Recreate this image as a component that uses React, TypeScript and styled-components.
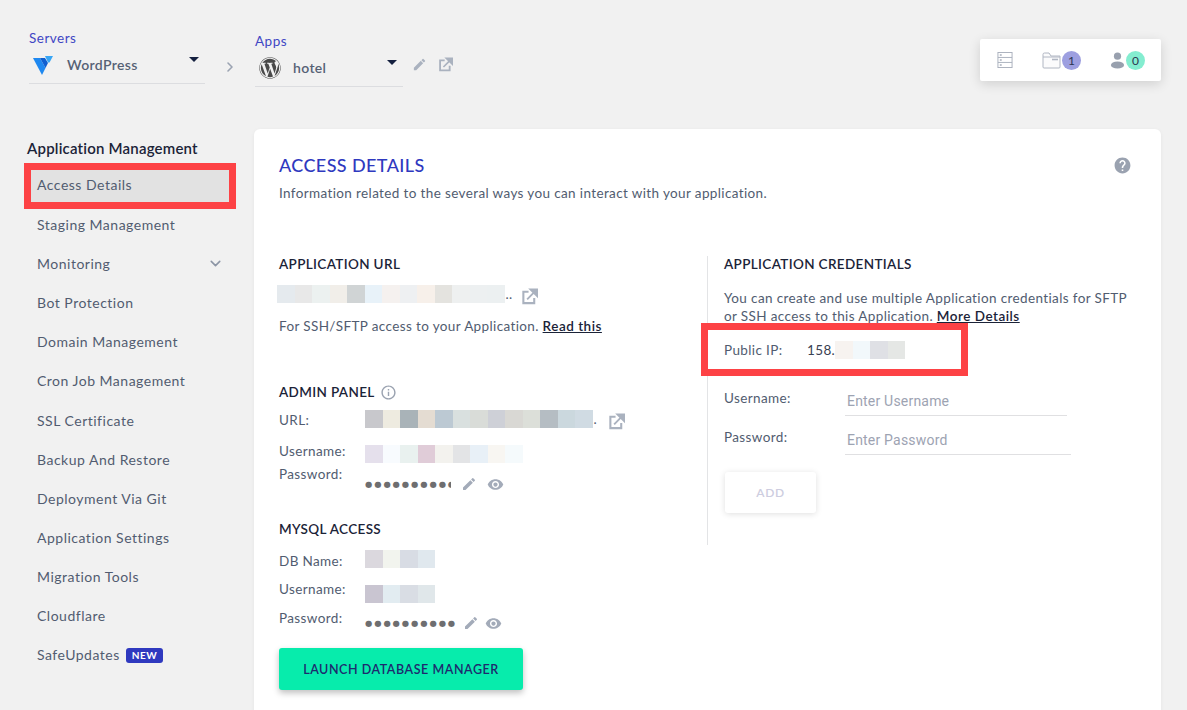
import React from "react";
import styled, { createGlobalStyle } from "styled-components";
import { FaWordpress } from "react-icons/fa";
import { MdEdit, MdHelp, MdInfoOutline, MdVisibility } from "react-icons/md";
import { ChevronDown, ChevronRight } from "lucide-react";

const GlobalStyle = createGlobalStyle`
  html, body {
    margin: 0;
    height: 710px;
    overflow: hidden;
    background: #f1f1f1;
    font-family: "Lato", "Liberation Sans", sans-serif;
    font-size: 13.5px;
    letter-spacing: 0.37px;
    color: #515c70;
  }
  * { box-sizing: border-box; }
`;

const menu = [
  "Staging Management",
  "Monitoring",
  "Bot Protection",
  "Domain Management",
  "Cron Job Management",
  "SSL Certificate",
  "Backup And Restore",
  "Deployment Via Git",
  "Application Settings",
  "Migration Tools",
  "Cloudflare",
];

const ExternalIcon = ({ size = 17 }: { size?: number }) => (
  <IconSvg width={size} height={size} viewBox="0 0 18 18">
    <path d="M8 4H2.5V16H14V10.5" fill="none" stroke="#aab2bf" strokeWidth="2.2" />
    <path d="M6.5 12 L13 5.5 M10 1.5H17V8.5Z" fill="#aab2bf" stroke="#aab2bf" strokeWidth="2" />
  </IconSvg>
);

const Mosaic = ({ colors }: { colors: string[] }) => (
  <MosaicRow>
    {colors.map((c, i) => (
      <MosaicCell key={i} $color={c} />
    ))}
  </MosaicRow>
);

export default function App() {
  return (
    <Page>
      <GlobalStyle />
      <TopBar>
        <Crumb $width={176}>
          <CrumbLabel>Servers</CrumbLabel>
          <Selector>
            <svg width="20" height="20" viewBox="0 0 20 20">
              <path d="M0 3H7L12.5 13L9 20Z" fill="#1e88f0" />
              <path d="M7 3H12L15 8L12.5 13Z" fill="#0f5fd0" />
              <path d="M12 1H20L16.5 7.5H15Z" fill="#38a6f5" />
            </svg>
            <SelectorName $gap={14}>WordPress</SelectorName>
            <Caret />
          </Selector>
        </Crumb>
        <CrumbArrow>
          <ChevronRight size={16} color="#9ba3b2" strokeWidth={2.4} />
        </CrumbArrow>
        <Crumb $width={148} $offset={3}>
          <CrumbLabel>Apps</CrumbLabel>
          <Selector>
            <FaWordpress size={22} color="#4a4a4a" />
            <SelectorName $gap={12}>hotel</SelectorName>
            <Caret />
          </Selector>
        </Crumb>
        <CrumbTools>
          <MdEdit size={15} color="#aab2bf" />
          <ExternalIcon size={15} />
        </CrumbTools>
        <Stats>
          <StatItem>
            <svg width="16" height="18" viewBox="0 0 17 18" fill="none" stroke="#a8afbc" strokeWidth="1">
              <rect x="1" y="1" width="15" height="16" />
              <path d="M1 6.3H16M1 11.6H16" />
              <path d="M3 3.6H5M3 9H5M3 14.3H5" strokeWidth="1.6" />
            </svg>
          </StatItem>
          <StatItem>
            <svg width="19" height="17" viewBox="0 0 19 17" fill="none" stroke="#b0b6c2" strokeWidth="1">
              <path d="M1 15V2.5Q1 1 2.5 1H7L9 4H18V15Q18 16 17 16H2Q1 16 1 15Z" fill="#fbfbfc" />
              <path d="M1 5H18" />
              <path d="M10 7.5H16" strokeWidth="1.6" />
            </svg>
            <Badge $color="#9d9fe0">1</Badge>
          </StatItem>
          <StatItem>
            <svg width="15" height="17" viewBox="0 0 14 17" fill="#98a0ae">
              <circle cx="7" cy="4.2" r="3.6" />
              <ellipse cx="7" cy="13" rx="6.6" ry="3.6" />
            </svg>
            <Badge $color="#84edd0">0</Badge>
          </StatItem>
        </Stats>
      </TopBar>
      <Body>
        <Sidebar>
          <SideTitle>Application Management</SideTitle>
          <SideActive>Access Details</SideActive>
          {menu.map((m) => (
            <SideItem key={m}>
              {m}
              {m === "Monitoring" && <ChevronDown size={17} color="#8c95a5" strokeWidth={2.2} />}
            </SideItem>
          ))}
          <SideItem>
            <span>
              SafeUpdates <NewTag>NEW</NewTag>
            </span>
          </SideItem>
        </Sidebar>
        <Card>
          <CardHead>
            <CardTitle>ACCESS DETAILS</CardTitle>
            <MdHelp size={19} color="#9aa2b0" />
          </CardHead>
          <CardText>Information related to the several ways you can interact with your application.</CardText>
          <Columns>
            <LeftColumn>
              <SectionTitle>APPLICATION URL</SectionTitle>
              <UrlRow $top={12} $left={-2} $iconGap={8}>
                <Mosaic colors={["#e5eaee", "#e8e8e8", "#ecf1f0", "#f1eee9", "#d0d4d5", "#e8f2f9", "#f5f1ef", "#eef0f2", "#f7f0ea", "#e4e3df", "#eef0f0", "#edf0f1", "#ecf0f1"]} />
                <Ellipsis>..</Ellipsis>
                <ExternalIcon />
              </UrlRow>
              <Note>
                For SSH/SFTP access to your Application. <StrongLink>Read this</StrongLink>
              </Note>

              <PanelTitle>
                ADMIN PANEL <MdInfoOutline size={17} color="#9aa2b0" />
              </PanelTitle>
              <DataRow $height={31}>
                <span>URL:</span>
                <UrlRow $top={-1} $iconGap={11}>
                  <Mosaic colors={["#c8c8cc", "#eeebe0", "#a9b3b8", "#e4dcd2", "#bcc9d3", "#d9e0df", "#d9dcd8", "#ced0d7", "#d9d8d4", "#dcdfd9", "#b5bdc3", "#cbd8de", "#d0dbe3"]} />
                  <Ellipsis>.</Ellipsis>
                  <ExternalIcon />
                </UrlRow>
              </DataRow>
              <DataRow $height={23}>
                <span>Username:</span>
                <Value $top={3}>
                  <Mosaic colors={["#e5e0ec", "#f8fbfe", "#e9f1ef", "#e0ccd8", "#f3f2ee", "#e3e4e6", "#e8f0f7", "#f8f6f2", "#f5fafc"]} />
                </Value>
              </DataRow>
              <DataRow $height={56}>
                <span>Password:</span>
                <SecretRow $top={10} $gap={10}>
                  <Dots $width={86}>{"●".repeat(10)}</Dots>
                  <MdEdit size={16} color="#a3abb9" />
                  <MdVisibility size={17} color="#a3abb9" />
                </SecretRow>
              </DataRow>

              <MysqlTitle>MYSQL ACCESS</MysqlTitle>
              <DataRow $height={28}>
                <span>DB Name:</span>
                <Value $top={-2}>
                  <Mosaic colors={["#dbd8de", "#f2f4ee", "#d8dce4", "#e0e8ee"]} />
                </Value>
              </DataRow>
              <DataRow $height={29}>
                <span>Username:</span>
                <Value $top={5}>
                  <Mosaic colors={["#c9c5d1", "#e2ecf1", "#d9dde4", "#e0e7ea"]} />
                </Value>
              </DataRow>
              <DataRow $height={39}>
                <span>Password:</span>
                <SecretRow $top={5} $gap={6}>
                  <Dots $width={92}>{"●".repeat(10)}</Dots>
                  <MdEdit size={16} color="#a3abb9" />
                  <MdVisibility size={17} color="#a3abb9" />
                </SecretRow>
              </DataRow>
              <LaunchButton>LAUNCH DATABASE MANAGER</LaunchButton>
            </LeftColumn>
            <RightColumn>
              <SectionTitle>APPLICATION CREDENTIALS</SectionTitle>
              <CredentialsNote>
                You can create and use multiple Application credentials for SFTP or SSH access to this Application.{" "}
                <StrongLink>More Details</StrongLink>
              </CredentialsNote>
              <PublicIp>
                <IpLabel>Public IP:</IpLabel>
                <IpValue>158.</IpValue>
                <Mosaic colors={["#f7f3f0", "#f2f8fb", "#dfe0e5", "#e5e7e5"]} />
              </PublicIp>
              <Field $width={222}>
                <span>Username:</span>
                <FieldInput placeholder="Enter Username" />
              </Field>
              <Field $width={226}>
                <span>Password:</span>
                <FieldInput placeholder="Enter Password" />
              </Field>
              <AddButton>ADD</AddButton>
            </RightColumn>
          </Columns>
        </Card>
      </Body>
    </Page>
  );
}

const Page = styled.div`
  height: 710px;
  overflow: hidden;
`;

const TopBar = styled.header`
  display: flex;
  align-items: flex-start;
  height: 129px;
  padding: 31px 26px 0 29px;
`;

const Crumb = styled.div<{ $width: number; $offset?: number }>`
  width: ${(p) => p.$width}px;
  margin-top: ${(p) => p.$offset ?? 0}px;
`;

const CrumbLabel = styled.div`
  color: #4046c4;
  font-size: 13.5px;
  line-height: 15px;
  letter-spacing: 0.5px;
`;

const Selector = styled.div`
  display: flex;
  align-items: center;
  height: 38px;
  padding-left: 4px;
  border-bottom: 1px solid #dcdde0;
`;

const SelectorName = styled.span<{ $gap: number }>`
  margin-left: ${(p) => p.$gap}px;
  font-size: 14px;
  font-weight: 600;
  letter-spacing: 0.35px;
  color: #566175;
  flex: 1;
`;

const Caret = styled.span`
  width: 0;
  height: 0;
  margin: 0 6px 11px 0;
  border-left: 5px solid transparent;
  border-right: 5px solid transparent;
  border-top: 5px solid #14203f;
`;

const CrumbArrow = styled.div`
  width: 50px;
  display: flex;
  justify-content: center;
  margin-top: 28px;
`;

const CrumbTools = styled.div`
  display: flex;
  align-items: center;
  gap: 11px;
  margin: 26px 0 0 9px;
`;

const IconSvg = styled.svg`
  display: block;
  flex: none;
`;

const Stats = styled.div`
  margin: 8px 0 0 auto;
  width: 181px;
  height: 42px;
  display: flex;
  align-items: center;
  padding-left: 17px;
  gap: 29px;
  background: #fff;
  border-radius: 2px;
  box-shadow: 0 3px 12px rgba(0, 0, 0, 0.14);
`;

const StatItem = styled.div`
  display: flex;
  align-items: center;
  gap: 1px;
`;

const Badge = styled.span<{ $color: string }>`
  width: 19px;
  height: 19px;
  border-radius: 50%;
  background: ${(p) => p.$color};
  color: #2c3550;
  font-size: 12px;
  letter-spacing: 0;
  line-height: 19px;
  text-align: center;
`;

const Body = styled.div`
  display: flex;
  align-items: flex-start;
  padding-left: 24px;
`;

const Sidebar = styled.nav`
  width: 212px;
  margin-right: 18px;
`;

const SideTitle = styled.div`
  margin: 10px 0 6px 3px;
  font-size: 15px;
  line-height: 18px;
  font-weight: 600;
  letter-spacing: 0.2px;
  color: #1b2338;
`;

const SideItem = styled.div`
  display: flex;
  justify-content: space-between;
  align-items: center;
  height: 39.1px;
  padding: 0 12px 0 13px;
  font-size: 14px;
  letter-spacing: 0.5px;
`;

const SideActive = styled(SideItem)`
  height: 46px;
  margin-bottom: -4px;
  padding: 0 0 3px 6px;
  border: 7px solid #fd4245;
  background: #e2e2e2;
`;

const NewTag = styled.span`
  display: inline-block;
  margin-left: 2px;
  padding: 0 6px;
  background: #2f39bf;
  border-radius: 3px;
  color: #fff;
  font-size: 10px;
  font-weight: 700;
  line-height: 15px;
  vertical-align: 1px;
`;

const Card = styled.main`
  width: 907px;
  height: 640px;
  padding: 24px 25px;
  background: #fff;
  border-radius: 6px;
  box-shadow: 0 1px 4px rgba(0, 0, 0, 0.05);
`;

const CardHead = styled.div`
  display: flex;
  justify-content: space-between;
  align-items: center;
  padding-right: 4px;
`;

const CardTitle = styled.h1`
  margin: 0;
  font-size: 18px;
  line-height: 24px;
  font-weight: 500;
  letter-spacing: 0.4px;
  color: #2f39bf;
`;

const CardText = styled.p`
  margin: 7px 0 0;
  line-height: 18px;
`;

const Columns = styled.div`
  display: flex;
  align-items: flex-start;
  margin-top: 54px;
`;

const LeftColumn = styled.section`
  flex: none;
  width: 428px;
`;

const RightColumn = styled.section`
  flex: none;
  width: 429px;
  height: 289px;
  padding-left: 16px;
  border-left: 1px solid #e3e4e6;
`;

const SectionTitle = styled.h2`
  margin: 0;
  font-size: 13.5px;
  line-height: 17px;
  font-weight: 600;
  letter-spacing: 0.35px;
  color: #1b2338;
`;

const PanelTitle = styled(SectionTitle)`
  display: flex;
  align-items: center;
  gap: 5px;
  height: 18px;
  margin: 48px 0 10px;
`;

const MysqlTitle = styled(SectionTitle)`
  margin: 0 0 14px;
`;

const UrlRow = styled.div<{ $top: number; $left?: number; $iconGap: number }>`
  display: flex;
  align-items: center;
  height: 18px;
  margin: ${(p) => p.$top}px 0 0 ${(p) => p.$left ?? 0}px;
  & > svg {
    margin: 4px 0 0 ${(p) => p.$iconGap}px;
  }
`;

const Ellipsis = styled.span`
  margin-left: 1px;
`;

const MosaicRow = styled.div`
  display: flex;
`;

const MosaicCell = styled.i<{ $color: string }>`
  display: block;
  width: 17.5px;
  height: 18px;
  background: ${(p) => p.$color};
`;

const Note = styled.p`
  margin: 14px 0 0;
  line-height: 18px;
`;

const StrongLink = styled.a`
  font-weight: 600;
  letter-spacing: 0.5px;
  color: #1b2338;
  text-decoration: underline;
`;

const DataRow = styled.div<{ $height: number }>`
  display: grid;
  grid-template-columns: 86px 1fr;
  align-items: start;
  height: ${(p) => p.$height}px;
  line-height: 18px;
`;

const Value = styled.div<{ $top: number }>`
  margin-top: ${(p) => p.$top}px;
`;

const SecretRow = styled.div<{ $top: number; $gap: number }>`
  display: flex;
  align-items: center;
  gap: ${(p) => p.$gap}px;
  margin-top: ${(p) => p.$top}px;
`;

const Dots = styled.span<{ $width: number }>`
  width: ${(p) => p.$width}px;
  overflow: hidden;
  white-space: nowrap;
  color: #6e6e70;
  font-family: "DejaVu Sans", sans-serif;
  font-size: 8.4px;
  letter-spacing: 1.9px;
  line-height: 18px;
`;

const LaunchButton = styled.button`
  display: block;
  width: 244px;
  height: 42px;
  border: none;
  border-radius: 3px;
  background: #07ecac;
  color: #1e2a6e;
  font-family: inherit;
  font-size: 12.5px;
  font-weight: 600;
  letter-spacing: 0.55px;
  box-shadow: 0 3px 6px rgba(0, 0, 0, 0.25);
`;

const CredentialsNote = styled.p`
  margin: 16px 0 0;
  width: 415px;
  line-height: 18px;
`;

const PublicIp = styled.div`
  display: flex;
  align-items: center;
  width: 267px;
  height: 53px;
  margin: -2px 0 13px -23px;
  padding-left: 16px;
  border: 7px solid #fd4245;
`;

const IpLabel = styled.span`
  width: 83px;
`;

const IpValue = styled.span`
  color: #3a4152;
`;

const Field = styled.label<{ $width: number }>`
  display: grid;
  grid-template-columns: 121px ${(p) => p.$width}px;
  height: 38.5px;
  line-height: 18px;
`;

const FieldInput = styled.input`
  height: 27px;
  padding: 0 2px 2px;
  border: none;
  border-bottom: 1px solid #e0e0e2;
  outline: none;
  background: transparent;
  font-family: "Roboto", sans-serif;
  font-size: 14px;
  letter-spacing: 0.2px;
  &::placeholder {
    color: #9da3b2;
  }
`;

const AddButton = styled.button`
  display: block;
  width: 91px;
  height: 41px;
  margin: 6px 0 0 1px;
  border: none;
  border-radius: 3px;
  background: #fff;
  color: #cdcde0;
  font-family: inherit;
  font-size: 12px;
  font-weight: 600;
  letter-spacing: 0.6px;
  box-shadow: 0 1px 6px rgba(0, 0, 0, 0.13);
`;
